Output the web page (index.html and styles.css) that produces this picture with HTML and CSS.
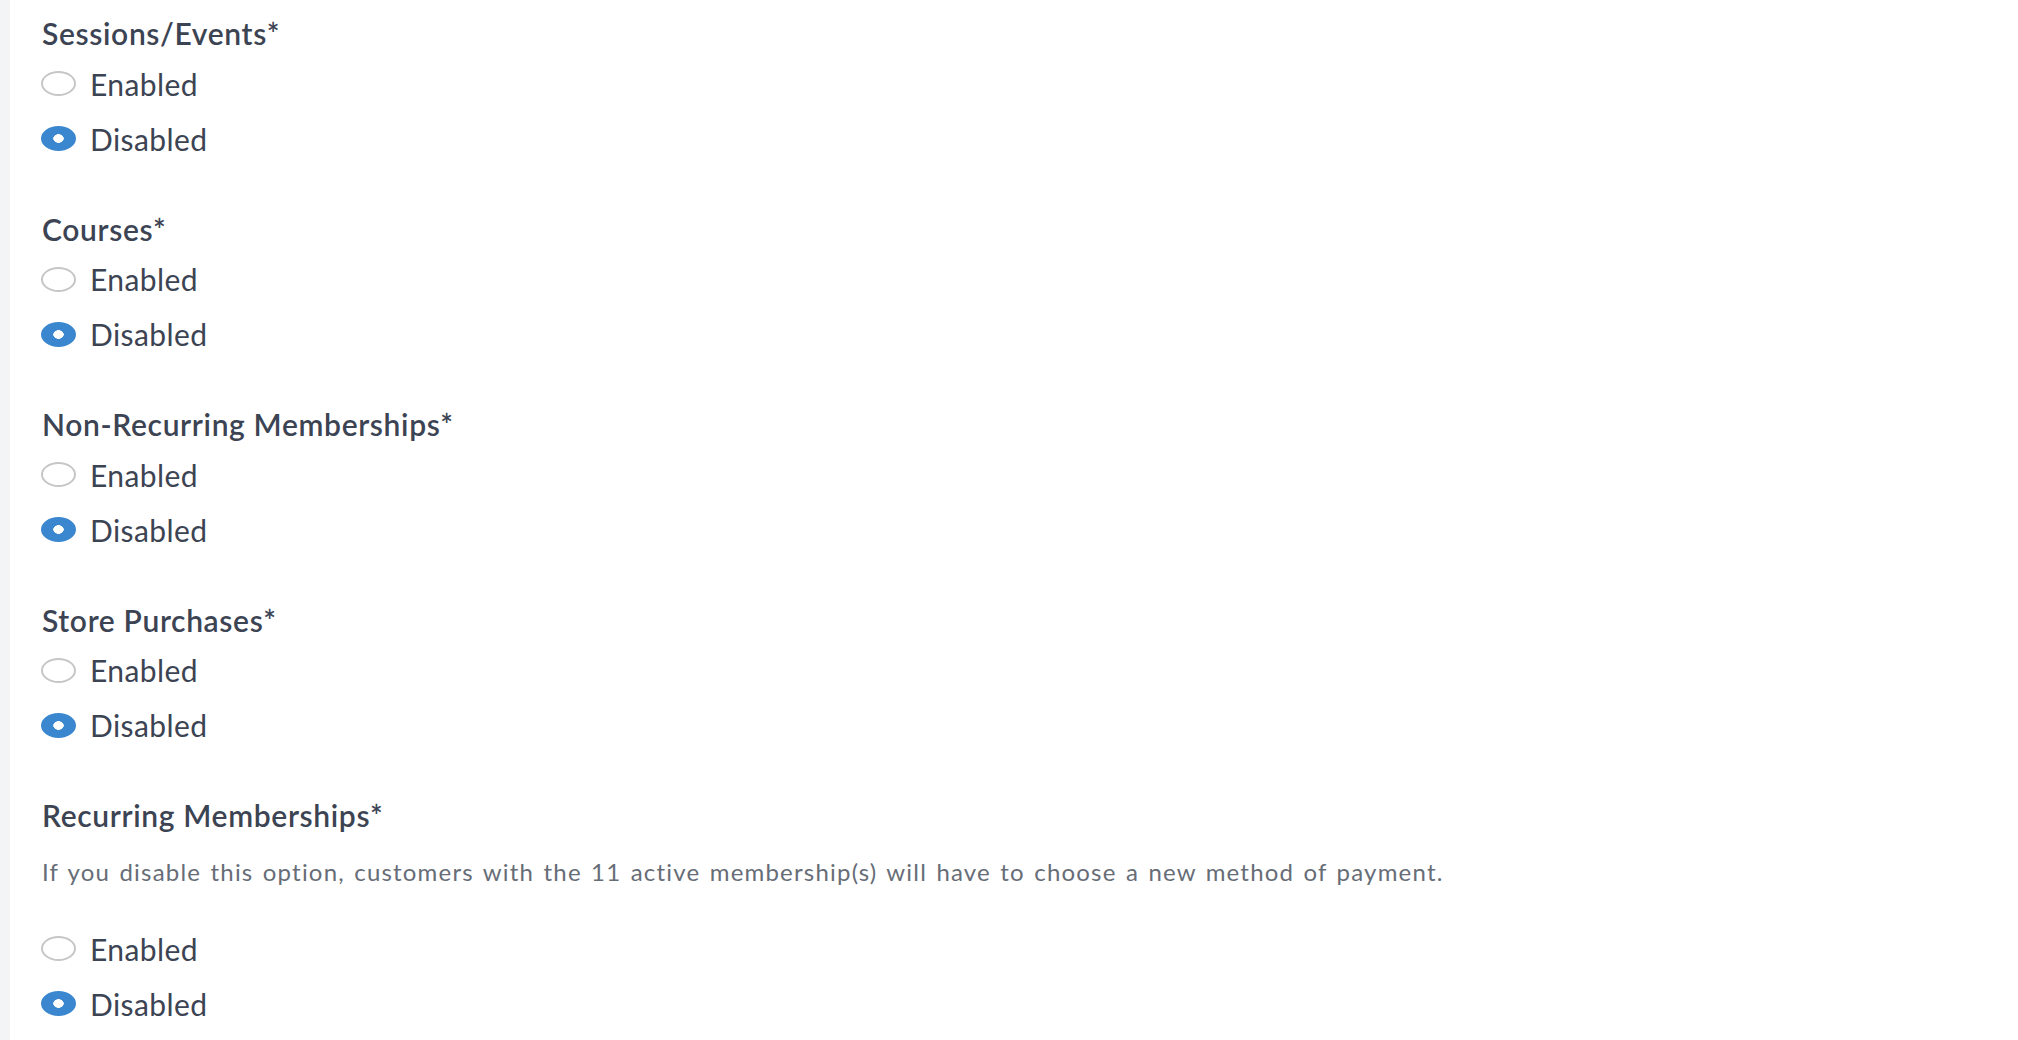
FILE: index.html
```html
<!DOCTYPE html>
<html lang="en">
<head>
    <meta charset="UTF-8">
    <meta name="viewport" content="width=device-width, initial-scale=1.0">
    <title>Payment settings</title>
    <link rel="stylesheet" href="styles.css">
</head>
<body>
    <div class="page">
        <div class="side-strip"></div>
        <form class="settings">
            <fieldset class="setting">
                <legend class="setting-title">Sessions/Events*</legend>
                <label class="option"><input type="radio" name="sessions" value="1"> Enabled</label>
                <label class="option"><input type="radio" name="sessions" value="0" checked> Disabled</label>
            </fieldset>

            <fieldset class="setting">
                <legend class="setting-title">Courses*</legend>
                <label class="option"><input type="radio" name="courses" value="1"> Enabled</label>
                <label class="option"><input type="radio" name="courses" value="0" checked> Disabled</label>
            </fieldset>

            <fieldset class="setting">
                <legend class="setting-title">Non-Recurring Memberships*</legend>
                <label class="option"><input type="radio" name="memberships" value="1"> Enabled</label>
                <label class="option"><input type="radio" name="memberships" value="0" checked> Disabled</label>
            </fieldset>

            <fieldset class="setting">
                <legend class="setting-title">Store Purchases*</legend>
                <label class="option"><input type="radio" name="store" value="1"> Enabled</label>
                <label class="option"><input type="radio" name="store" value="0" checked> Disabled</label>
            </fieldset>

            <fieldset class="setting">
                <legend class="setting-title">Recurring Memberships*</legend>
                <p class="setting-help">If you disable this option, customers with the 11 active membership(s) will have to choose a new method of payment.</p>
                <label class="option"><input type="radio" name="recurring" value="1"> Enabled</label>
                <label class="option"><input type="radio" name="recurring" value="0" checked> Disabled</label>
            </fieldset>
        </form>
    </div>
</body>
</html>
```

FILE: styles.css
```css
body {
    margin: 0;
    font-family: Lato, "Open Sans", sans-serif;
    color: #3c4453;
    background-color: #ffffff;
}
.page {
    display: flex;
    min-height: 100vh;
}
.side-strip {
    width: 10px;
    flex-shrink: 0;
    background-color: #f3f4f6;
}
.settings {
    padding: 13px 0 0 31px;
}
.setting {
    border: none;
    margin: 0 0 42.5px 0;
    padding: 0;
    display: flex;
    flex-direction: column;
}
.setting-title {
    padding: 0 0 0 1px;
    margin-bottom: 3px;
    font-size: 30px;
    font-weight: 600;
    line-height: 40px;
    letter-spacing: 0.65px;
}
.setting-help {
    margin: 19px 0 34px 1px;
    font-size: 24px;
    line-height: 30px;
    letter-spacing: 1.2px;
    word-spacing: 2px;
    color: #676d77;
}
.option {
    display: flex;
    align-items: center;
    gap: 14px;
    height: 55px;
    font-size: 30px;
    letter-spacing: 0.4px;
}
.option input {
    appearance: none;
    -webkit-appearance: none;
    margin: 0;
    width: 35px;
    height: 25px;
    border: 2px solid #c6c6c6;
    border-radius: 50%;
    background-color: #ffffff;
    box-sizing: border-box;
}
.option input:checked {
    border-color: #3b87cf;
    background: radial-gradient(ellipse 5.5px 4.5px, #ffffff 90%, #3b87cf 100%);
}
```
